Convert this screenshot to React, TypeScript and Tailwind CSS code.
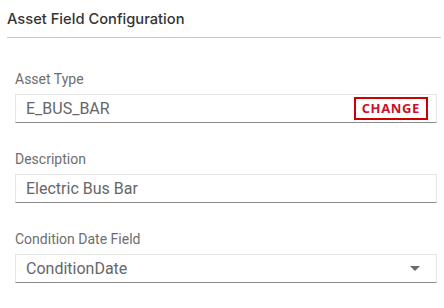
import React from 'react'

const Field = ({ label, children, first }: { label: string; children: React.ReactNode; first?: boolean }) => (
  <div className={first ? 'mt-[33px]' : 'mt-[28px]'}>
    <div className="text-sm leading-4 text-[#6e6e6e] mb-[7px]">{label}</div>
    <div className="h-[29px] flex items-center border border-[#e6e6e6] border-b-[#8c8c8c] bg-white">
      {children}
    </div>
  </div>
)

export default function App() {
  return (
    <div className="w-[444px] h-[308px] bg-white overflow-hidden" style={{ fontFamily: 'Roboto, "Liberation Sans", sans-serif' }}>
      <div className="ml-[7px] mr-[3px] pt-[9px] pb-[8px] border-b border-[#c8c8c8]">
        <h1 className="text-[14.7px] leading-5 font-medium text-[#333]" style={{ fontFamily: 'Inter, Roboto, sans-serif' }}>
          Asset Field Configuration
        </h1>
      </div>

      <div className="pl-[15px] pr-[7px]">
        <Field label="Asset Type" first>
          <span className="flex-1 pl-[10px] text-base text-[#666]">E_BUS_BAR</span>
          <button
            className="mr-[8px] h-[23px] px-[6px] border-2 border-[#c00] text-[13px] leading-none font-bold tracking-[0.05em] text-[#c8102e]"
            style={{ fontFamily: '"Open Sans", sans-serif' }}
          >
            CHANGE
          </button>
        </Field>

        <Field label="Description">
          <span className="flex-1 pl-[10px] text-base text-[#666]">Electric Bus Bar</span>
        </Field>

        <Field label="Condition Date Field">
          <span className="flex-1 pl-[10px] text-base text-[#666]">ConditionDate</span>
          <svg width="10" height="5" viewBox="0 0 10 5" className="mr-[16px]">
            <path d="M0 0h10L5 5z" fill="#6b6b6b" />
          </svg>
        </Field>
      </div>
    </div>
  )
}
